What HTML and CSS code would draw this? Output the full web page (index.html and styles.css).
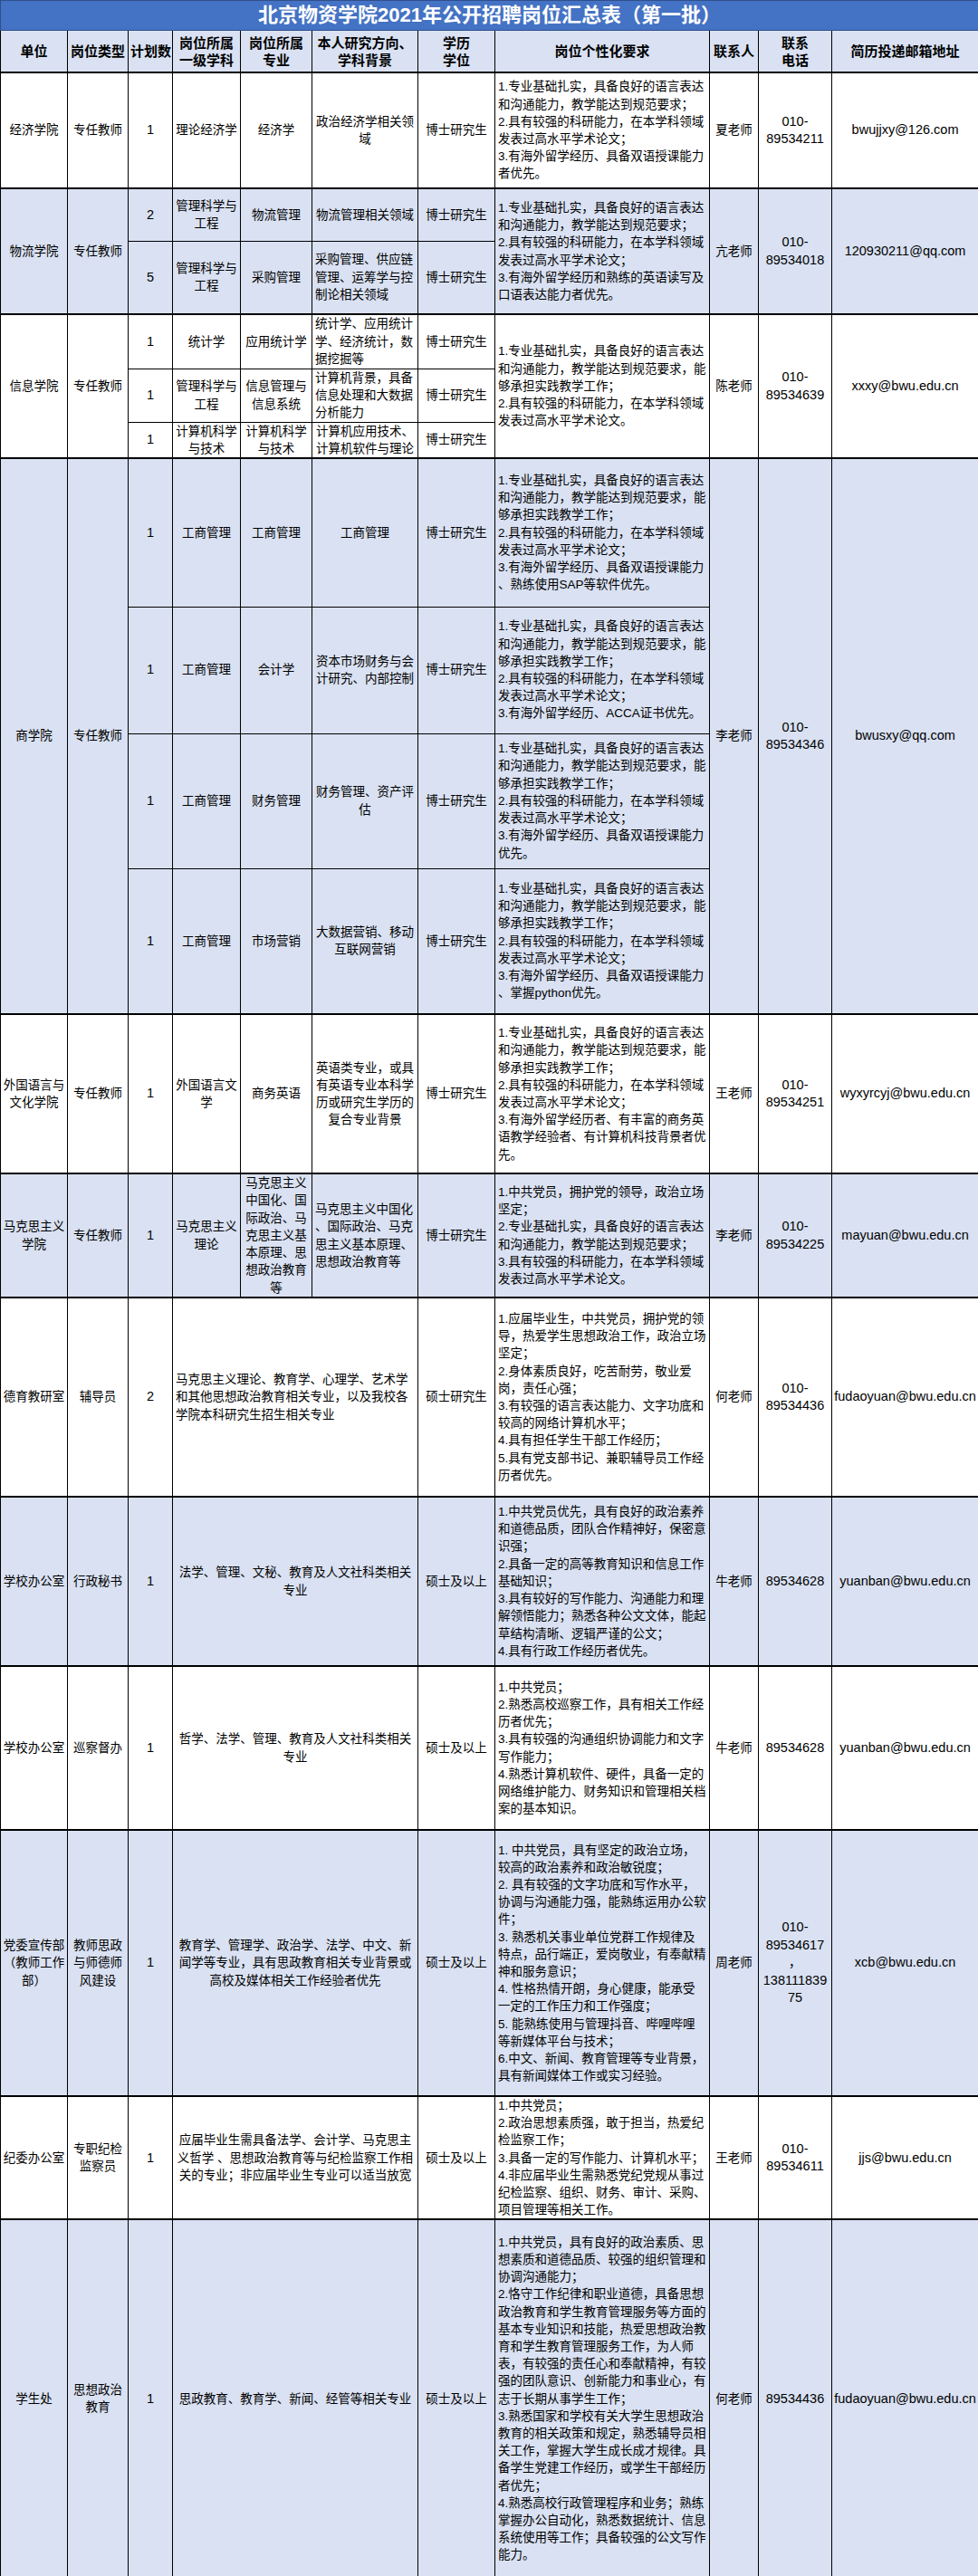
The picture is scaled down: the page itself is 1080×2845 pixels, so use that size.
FILE: index.html
```html
<!DOCTYPE html>
<html lang="zh-CN">
<head>
<meta charset="utf-8">
<title>北京物资学院2021年公开招聘岗位汇总表（第一批）</title>
<link rel="stylesheet" href="styles.css">
</head>
<body>
<table class="sheet">
  <colgroup>
    <col class="c-unit"><col class="c-type"><col class="c-num"><col class="c-disc"><col class="c-major"><col class="c-dir"><col class="c-deg"><col class="c-req"><col class="c-person"><col class="c-tel"><col class="c-mail">
  </colgroup>
  <thead>
    <tr class="title"><th colspan="11">北京物资学院2021年公开招聘岗位汇总表（第一批）</th></tr>
    <tr class="head">
      <th>单位</th><th>岗位类型</th><th>计划数</th><th>岗位所属<br>一级学科</th><th>岗位所属<br>专业</th><th>本人研究方向、<br>学科背景</th><th>学历<br>学位</th><th>岗位个性化要求</th><th>联系人</th><th>联系<br>电话</th><th>简历投递邮箱地址</th>
    </tr>
  </thead>
  <tbody>
    <!-- 经济学院 -->
    <tr class="grp r-jj">
      <td>经济学院</td><td>专任教师</td><td class="lat">1</td><td>理论经济学</td><td>经济学</td><td>政治经济学相关领<br>域</td><td>博士研究生</td>
      <td class="req">1.专业基础扎实，具备良好的语言表达<br>和沟通能力，教学能达到规范要求；<br>2.具有较强的科研能力，在本学科领域<br>发表过高水平学术论文；<br>3.有海外留学经历、具备双语授课能力<br>者优先。</td>
      <td>夏老师</td><td class="lat">010-<br>89534211</td><td class="lat">bwujjxy@126.com</td>
    </tr>
    <!-- 物流学院 -->
    <tr class="grp alt r-wl1">
      <td rowspan="2">物流学院</td><td rowspan="2">专任教师</td><td class="lat">2</td><td>管理科学与<br>工程</td><td>物流管理</td><td>物流管理相关领域</td><td>博士研究生</td>
      <td class="req" rowspan="2">1.专业基础扎实，具备良好的语言表达<br>和沟通能力，教学能达到规范要求；<br>2.具有较强的科研能力，在本学科领域<br>发表过高水平学术论文；<br>3.有海外留学经历和熟练的英语读写及<br>口语表达能力者优先。</td>
      <td rowspan="2">亢老师</td><td rowspan="2" class="lat">010-<br>89534018</td><td rowspan="2" class="lat">120930211@qq.com</td>
    </tr>
    <tr class="alt r-wl2">
      <td class="lat">5</td><td>管理科学与<br>工程</td><td>采购管理</td><td class="left">采购管理、供应链<br>管理、运筹学与控<br>制论相关领域</td><td>博士研究生</td>
    </tr>
    <!-- 信息学院 -->
    <tr class="grp r-xx1">
      <td rowspan="3">信息学院</td><td rowspan="3">专任教师</td><td class="lat">1</td><td>统计学</td><td>应用统计学</td><td class="left">统计学、应用统计<br>学、经济统计，数<br>据挖掘等</td><td>博士研究生</td>
      <td class="req" rowspan="3">1.专业基础扎实，具备良好的语言表达<br>和沟通能力，教学能达到规范要求，能<br>够承担实践教学工作；<br>2.具有较强的科研能力，在本学科领域<br>发表过高水平学术论文。</td>
      <td rowspan="3">陈老师</td><td rowspan="3" class="lat">010-<br>89534639</td><td rowspan="3" class="lat">xxxy@bwu.edu.cn</td>
    </tr>
    <tr class="r-xx2">
      <td class="lat">1</td><td>管理科学与<br>工程</td><td>信息管理与<br>信息系统</td><td class="left">计算机背景，具备<br>信息处理和大数据<br>分析能力</td><td>博士研究生</td>
    </tr>
    <tr class="r-xx3">
      <td class="lat">1</td><td>计算机科学<br>与技术</td><td>计算机科学<br>与技术</td><td>计算机应用技术、<br>计算机软件与理论</td><td>博士研究生</td>
    </tr>
    <!-- 商学院 -->
    <tr class="grp alt r-sx1">
      <td rowspan="4">商学院</td><td rowspan="4">专任教师</td><td class="lat">1</td><td>工商管理</td><td>工商管理</td><td>工商管理</td><td>博士研究生</td>
      <td class="req">1.专业基础扎实，具备良好的语言表达<br>和沟通能力，教学能达到规范要求，能<br>够承担实践教学工作；<br>2.具有较强的科研能力，在本学科领域<br>发表过高水平学术论文；<br>3.有海外留学经历、具备双语授课能力<br>、熟练使用SAP等软件优先。</td>
      <td rowspan="4">李老师</td><td rowspan="4" class="lat">010-<br>89534346</td><td rowspan="4" class="lat">bwusxy@qq.com</td>
    </tr>
    <tr class="alt r-sx2">
      <td class="lat">1</td><td>工商管理</td><td>会计学</td><td>资本市场财务与会<br>计研究、内部控制</td><td>博士研究生</td>
      <td class="req">1.专业基础扎实，具备良好的语言表达<br>和沟通能力，教学能达到规范要求，能<br>够承担实践教学工作；<br>2.具有较强的科研能力，在本学科领域<br>发表过高水平学术论文；<br>3.有海外留学经历、ACCA证书优先。</td>
    </tr>
    <tr class="alt r-sx3">
      <td class="lat">1</td><td>工商管理</td><td>财务管理</td><td>财务管理、资产评<br>估</td><td>博士研究生</td>
      <td class="req">1.专业基础扎实，具备良好的语言表达<br>和沟通能力，教学能达到规范要求，能<br>够承担实践教学工作；<br>2.具有较强的科研能力，在本学科领域<br>发表过高水平学术论文；<br>3.有海外留学经历、具备双语授课能力<br>优先。</td>
    </tr>
    <tr class="alt r-sx4">
      <td class="lat">1</td><td>工商管理</td><td>市场营销</td><td>大数据营销、移动<br>互联网营销</td><td>博士研究生</td>
      <td class="req">1.专业基础扎实，具备良好的语言表达<br>和沟通能力，教学能达到规范要求，能<br>够承担实践教学工作；<br>2.具有较强的科研能力，在本学科领域<br>发表过高水平学术论文；<br>3.有海外留学经历、具备双语授课能力<br>、掌握python优先。</td>
    </tr>
    <!-- 外国语言与文化学院 -->
    <tr class="grp r-wy">
      <td>外国语言与<br>文化学院</td><td>专任教师</td><td class="lat">1</td><td>外国语言文<br>学</td><td>商务英语</td><td>英语类专业，或具<br>有英语专业本科学<br>历或研究生学历的<br>复合专业背景</td><td>博士研究生</td>
      <td class="req">1.专业基础扎实，具备良好的语言表达<br>和沟通能力，教学能达到规范要求，能<br>够承担实践教学工作；<br>2.具有较强的科研能力，在本学科领域<br>发表过高水平学术论文；<br>3.有海外留学经历者、有丰富的商务英<br>语教学经验者、有计算机科技背景者优<br>先。</td>
      <td>王老师</td><td class="lat">010-<br>89534251</td><td class="lat">wyxyrcyj@bwu.edu.cn</td>
    </tr>
    <!-- 马克思主义学院 -->
    <tr class="grp alt r-mks">
      <td>马克思主义<br>学院</td><td>专任教师</td><td class="lat">1</td><td>马克思主义<br>理论</td><td>马克思主义<br>中国化、国<br>际政治、马<br>克思主义基<br>本原理、思<br>想政治教育<br>等</td><td class="left">马克思主义中国化<br>、国际政治、马克<br>思主义基本原理、<br>思想政治教育等</td><td>博士研究生</td>
      <td class="req">1.中共党员，拥护党的领导，政治立场<br>坚定；<br>2.专业基础扎实，具备良好的语言表达<br>和沟通能力，教学能达到规范要求；<br>3.具有较强的科研能力，在本学科领域<br>发表过高水平学术论文。</td>
      <td>李老师</td><td class="lat">010-<br>89534225</td><td class="lat">mayuan@bwu.edu.cn</td>
    </tr>
    <!-- 德育教研室 -->
    <tr class="grp r-dy">
      <td>德育教研室</td><td>辅导员</td><td class="lat">2</td><td colspan="3" class="left">马克思主义理论、教育学、心理学、艺术学<br>和其他思想政治教育相关专业，以及我校各<br>学院本科研究生招生相关专业</td><td>硕士研究生</td>
      <td class="req">1.应届毕业生，中共党员，拥护党的领<br>导，热爱学生思想政治工作，政治立场<br>坚定；<br>2.身体素质良好，吃苦耐劳，敬业爱<br>岗，责任心强；<br>3.有较强的语言表达能力、文字功底和<br>较高的网络计算机水平；<br>4.具有担任学生干部工作经历；<br>5.具有党支部书记、兼职辅导员工作经<br>历者优先。</td>
      <td>何老师</td><td class="lat">010-<br>89534436</td><td class="lat">fudaoyuan@bwu.edu.cn</td>
    </tr>
    <!-- 学校办公室 行政秘书 -->
    <tr class="grp alt r-xb1">
      <td>学校办公室</td><td>行政秘书</td><td class="lat">1</td><td colspan="3">法学、管理、文秘、教育及人文社科类相关<br>专业</td><td>硕士及以上</td>
      <td class="req">1.中共党员优先，具有良好的政治素养<br>和道德品质，团队合作精神好，保密意<br>识强；<br>2.具备一定的高等教育知识和信息工作<br>基础知识；<br>3.具有较好的写作能力、沟通能力和理<br>解领悟能力；熟悉各种公文文体，能起<br>草结构清晰、逻辑严谨的公文；<br>4.具有行政工作经历者优先。</td>
      <td>牛老师</td><td class="lat">89534628</td><td class="lat">yuanban@bwu.edu.cn</td>
    </tr>
    <!-- 学校办公室 巡察督办 -->
    <tr class="grp r-xb2">
      <td>学校办公室</td><td>巡察督办</td><td class="lat">1</td><td colspan="3">哲学、法学、管理、教育及人文社科类相关<br>专业</td><td>硕士及以上</td>
      <td class="req">1.中共党员；<br>2.熟悉高校巡察工作，具有相关工作经<br>历者优先；<br>3.具有较强的沟通组织协调能力和文字<br>写作能力；<br>4.熟悉计算机软件、硬件，具备一定的<br>网络维护能力、财务知识和管理相关档<br>案的基本知识。</td>
      <td>牛老师</td><td class="lat">89534628</td><td class="lat">yuanban@bwu.edu.cn</td>
    </tr>
    <!-- 党委宣传部 -->
    <tr class="grp alt r-dw">
      <td>党委宣传部<br>（教师工作<br>部）</td><td>教师思政<br>与师德师<br>风建设</td><td class="lat">1</td><td colspan="3">教育学、管理学、政治学、法学、中文、新<br>闻学等专业，具有思政教育相关专业背景或<br>高校及媒体相关工作经验者优先</td><td>硕士及以上</td>
      <td class="req">1. 中共党员，具有坚定的政治立场，<br>较高的政治素养和政治敏锐度；<br>2. 具有较强的文字功底和写作水平，<br>协调与沟通能力强，能熟练运用办公软<br>件；<br>3. 熟悉机关事业单位党群工作规律及<br>特点，品行端正，爱岗敬业，有奉献精<br>神和服务意识；<br>4. 性格热情开朗，身心健康，能承受<br>一定的工作压力和工作强度；<br>5. 能熟练使用与管理抖音、哔哩哔哩<br>等新媒体平台与技术；<br>6.中文、新闻、教育管理等专业背景，<br>具有新闻媒体工作或实习经验。</td>
      <td>周老师</td><td class="lat tel-long">010-<br>89534617<br>，<br>138111839<br>75</td><td class="lat">xcb@bwu.edu.cn</td>
    </tr>
    <!-- 纪委办公室 -->
    <tr class="grp r-jw">
      <td>纪委办公室</td><td>专职纪检<br>监察员</td><td class="lat">1</td><td colspan="3">应届毕业生需具备法学、会计学、马克思主<br>义哲学 、思想政治教育等与纪检监察工作相<br>关的专业；非应届毕业生专业可以适当放宽</td><td>硕士及以上</td>
      <td class="req">1.中共党员；<br>2.政治思想素质强，敢于担当，热爱纪<br>检监察工作；<br>3.具备一定的写作能力、计算机水平；<br>4.非应届毕业生需熟悉党纪党规从事过<br>纪检监察、组织、财务、审计、采购、<br>项目管理等相关工作。</td>
      <td>王老师</td><td class="lat">010-<br>89534611</td><td class="lat">jjs@bwu.edu.cn</td>
    </tr>
    <!-- 学生处 -->
    <tr class="grp alt r-xs">
      <td>学生处</td><td>思想政治<br>教育</td><td class="lat">1</td><td colspan="3">思政教育、教育学、新闻、经管等相关专业</td><td>硕士及以上</td>
      <td class="req">1.中共党员，具有良好的政治素质、思<br>想素质和道德品质、较强的组织管理和<br>协调沟通能力；<br>2.恪守工作纪律和职业道德，具备思想<br>政治教育和学生教育管理服务等方面的<br>基本专业知识和技能，热爱思想政治教<br>育和学生教育管理服务工作，为人师<br>表，有较强的责任心和奉献精神，有较<br>强的团队意识、创新能力和事业心，有<br>志于长期从事学生工作；<br>3.熟悉国家和学校有关大学生思想政治<br>教育的相关政策和规定，熟悉辅导员相<br>关工作，掌握大学生成长成才规律。具<br>备学生党建工作经历，或学生干部经历<br>者优先；<br>4.熟悉高校行政管理程序和业务；熟练<br>掌握办公自动化，熟悉数据统计、信息<br>系统使用等工作；具备较强的公文写作<br>能力。</td>
      <td>何老师</td><td class="lat">89534436</td><td class="lat">fudaoyuan@bwu.edu.cn</td>
    </tr>
  </tbody>
</table>
</body>
</html>
```

FILE: styles.css
```css
html, body {
  margin: 0;
  padding: 0;
  background: #ffffff;
}

.sheet {
  width: 1080px;
  border-collapse: collapse;
  table-layout: fixed;
  font-family: "Liberation Sans", "Noto Sans CJK SC", sans-serif;
  font-size: 13.5px;
  line-height: 19.2px;
  color: #000000;
}

.c-unit { width: 74px; }
.c-type { width: 67px; }
.c-num { width: 49px; }
.c-disc { width: 75px; }
.c-major { width: 79px; }
.c-dir { width: 117px; }
.c-deg { width: 85px; }
.c-req { width: 237px; }
.c-person { width: 54px; }
.c-tel { width: 81px; }
.c-mail { width: 162px; }

.sheet th,
.sheet td {
  border: 1px solid #000000;
  padding: 0 2px;
  text-align: center;
  vertical-align: middle;
  white-space: nowrap;
  overflow: hidden;
}

.title th {
  height: 32px;
  padding: 0;
  background: #4472c4;
  color: #ffffff;
  font-size: 22px;
  line-height: 30px;
  font-weight: bold;
  border-color: #2f4f8a;
}

.head th {
  height: 45px;
  background: #d9e1f2;
  font-size: 15px;
  line-height: 19px;
  font-weight: bold;
}

.alt td {
  background: #d9e1f2;
}

.grp td {
  border-top: 2px solid #000000;
}

.sheet td.lat {
  font-size: 14.5px;
  padding: 0 1px;
}

.sheet td.tel-long {
  line-height: 19.5px;
}

.sheet td.req {
  text-align: left;
  padding: 0 0 0 3px;
}

.sheet td.left {
  text-align: left;
  padding-left: 3px;
}

.r-jj { height: 128px; }
.r-wl1 { height: 58px; }
.r-wl2 { height: 81px; }
.r-xx1 { height: 60px; }
.r-xx2 { height: 59px; }
.r-xx3 { height: 40px; }
.r-sx1 { height: 164px; }
.r-sx2 { height: 140px; }
.r-sx3 { height: 149px; }
.r-sx4 { height: 161px; }
.r-wy { height: 176px; }
.r-mks { height: 137px; }
.r-dy { height: 220px; }
.r-xb1 { height: 187px; }
.r-xb2 { height: 181px; }
.r-dw { height: 294px; }
.r-jw { height: 136px; }
.r-xs { height: 395px; }
```
